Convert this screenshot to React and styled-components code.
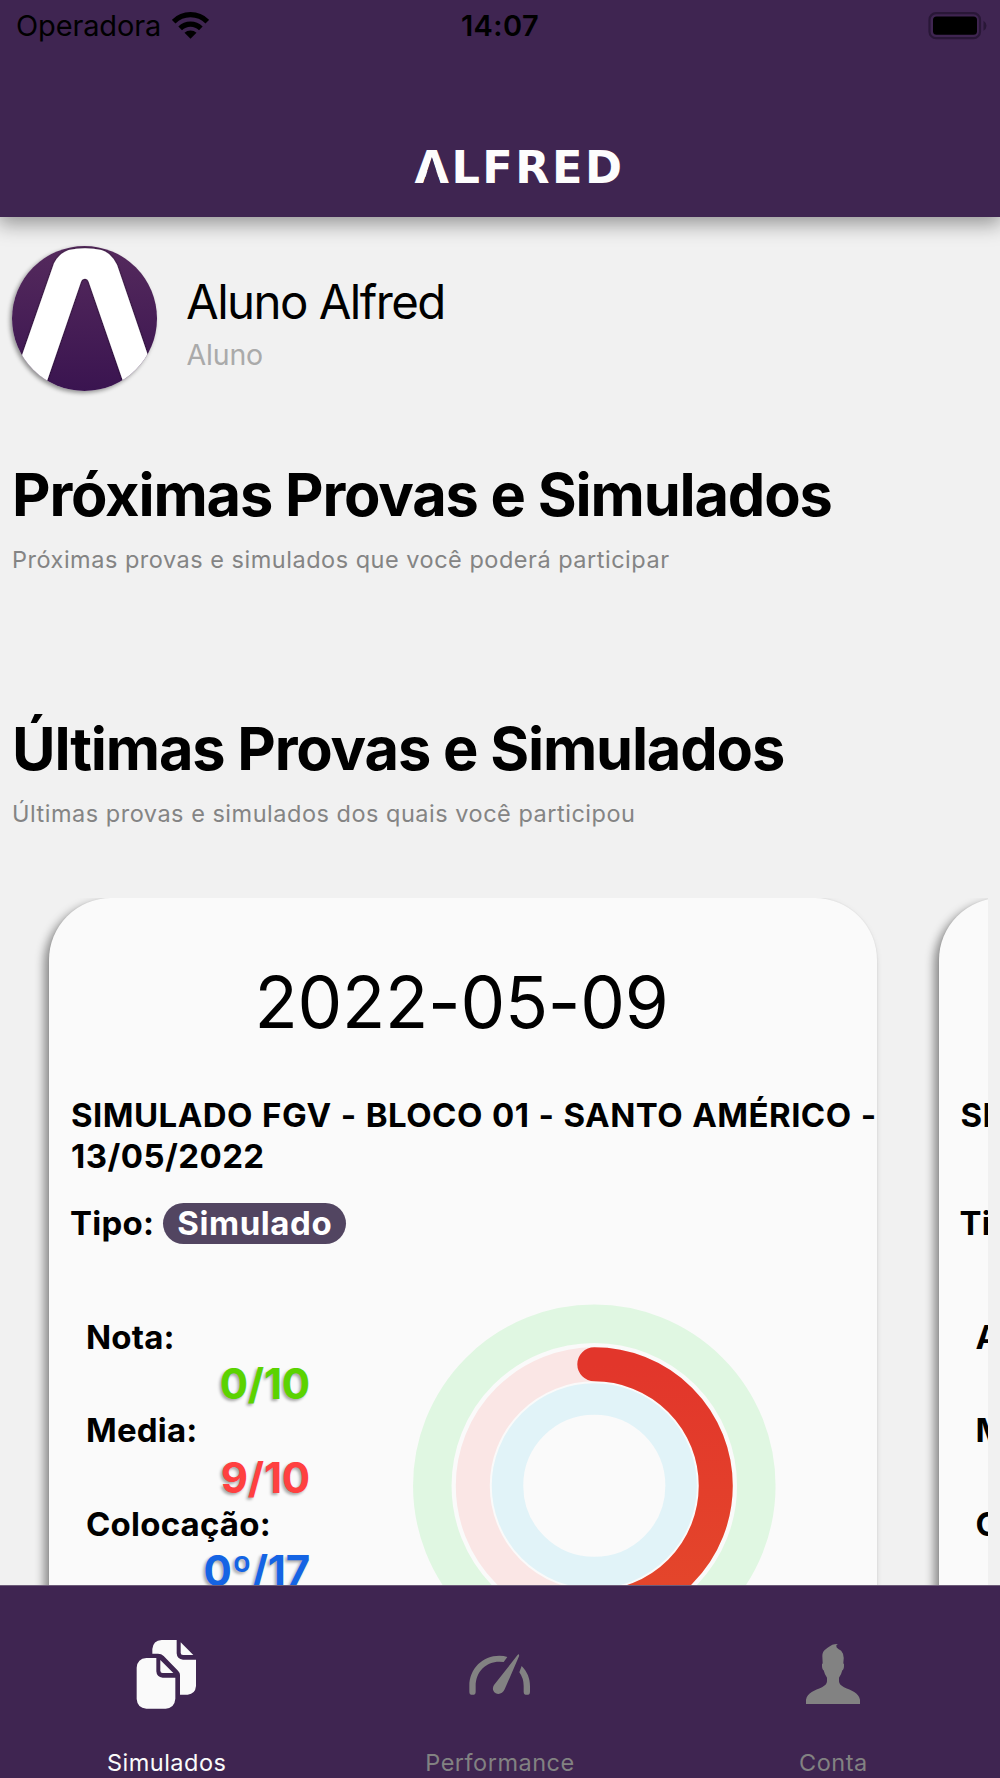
import React from 'react';
import styled, { createGlobalStyle } from 'styled-components';

const GlobalStyle = createGlobalStyle`
  html, body { margin: 0; padding: 0; }
  body { background: #f1f1f1; }
  *, *::before, *::after { box-sizing: border-box; }
`;

const Screen = styled.div`
  display: flex;
  flex-direction: column;
  width: 1000px;
  height: 1778px;
  overflow: hidden;
  background: #f1f1f1;
  color: #000;
  font-family: Inter, "Liberation Sans", sans-serif;
`;

const Header = styled.header`
  flex: none;
  display: flex;
  flex-direction: column;
  height: 217px;
  background: #3f2551;
  box-shadow: 0 5px 19px 2px rgba(0, 0, 0, 0.38);
  z-index: 2;
`;

const StatusBar = styled.div`
  display: grid;
  grid-template-columns: 1fr auto 1fr;
  align-items: center;
  height: 51px;
  padding: 0 12px 0 16px;
  font-size: 29px;
  line-height: 51px;
`;

const Carrier = styled.div`
  display: flex;
  align-items: center;
  gap: 11px;
  letter-spacing: -0.14px;
`;

const Clock = styled.div`
  margin-right: 4px;
  font-weight: 600;
  letter-spacing: 0.4px;
`;

const BatterySlot = styled.div`
  display: flex;
  justify-content: flex-end;
`;

const Brand = styled.div`
  display: flex;
  justify-content: center;
  margin-top: 91px;
  padding-left: 39px;
  color: #fdfdfd;
  font: 700 44.6px/52px "DejaVu Sans", sans-serif;
  letter-spacing: 2.5px;
`;

const OpenA = styled.span`
  position: relative;
  &::after {
    content: "";
    position: absolute;
    left: 8.5px;
    top: 15px;
    width: 18px;
    height: 28px;
    background: #3f2551;
    clip-path: polygon(50% 0, 100% 100%, 0 100%);
  }
`;

const Main = styled.main`
  flex: 1;
  min-height: 0;
  overflow: hidden;
  padding: 29px 12px 0;
`;

const Profile = styled.section`
  display: flex;
  align-items: flex-start;
  gap: 29px;
  height: 146px;
`;

const Avatar = styled.div`
  width: 145px;
  height: 145px;
  border-radius: 50%;
  box-shadow: -2px 2px 4px rgba(0, 0, 0, 0.4);
  svg { display: block; border-radius: 50%; }
`;

const Identity = styled.div`
  padding-top: 25.5px;
`;

const Name = styled.div`
  font-size: 47.4px;
  line-height: 60px;
  letter-spacing: -1.55px;
`;

const Role = styled.div`
  margin-top: 5px;
  padding-left: 0.6px;
  font-size: 28.5px;
  line-height: 36px;
  letter-spacing: -0.19px;
  color: #aaa;
`;

const Section = styled.section`
  margin-top: ${(p) => p.$gap}px;
`;

const SectionTitle = styled.h1`
  margin: 0;
  font-size: 59.5px;
  font-weight: 700;
  line-height: 72px;
  letter-spacing: -1.17px;
  white-space: nowrap;
`;

const SectionHint = styled.p`
  margin: 16px 0 0;
  font-size: 23.5px;
  line-height: 28px;
  letter-spacing: 0.51px;
  color: #848484;
`;

const Carousel = styled.div`
  display: flex;
  gap: 61.5px;
  margin-top: 70px;
  padding-left: 37px;
  overflow: hidden;
`;

const Card = styled.article`
  flex: none;
  width: 828px;
  height: 900px;
  padding-top: 62px;
  border-radius: 62px;
  background: #fafafa;
  box-shadow: -5px 5px 10px rgba(0, 0, 0, 0.42), 0 0 2px rgba(0, 0, 0, 0.08);
`;

const ExamDate = styled.div`
  padding-right: 3px;
  font-size: 71px;
  line-height: 84px;
  letter-spacing: -0.3px;
  text-align: center;
`;

const ExamTitle = styled.h2`
  width: 812px;
  min-height: 82px;
  margin: 51px 0 0 22px;
  font-size: 33px;
  font-weight: 700;
  line-height: 41px;
  letter-spacing: 0.45px;
  word-spacing: 0.9px;
`;

const KindRow = styled.div`
  display: flex;
  gap: 9px;
  margin: 26px 0 0 21px;
  font-size: 33px;
  font-weight: 700;
  line-height: 41px;
  letter-spacing: 0.25px;
`;

const Kind = styled.span`
  padding: 0 14px;
  border-radius: 21px;
  background: #524561;
  color: #fff;
  letter-spacing: 0.58px;
`;

const Details = styled.div`
  display: flex;
  align-items: flex-start;
  gap: 103px;
  margin: 60px 0 0 36px;
`;

const Stats = styled.div`
  display: flex;
  flex-direction: column;
  width: 225px;
  padding: 9.6px 0 0 1px;
`;

const StatLabel = styled.div`
  font-size: 33px;
  font-weight: 700;
  line-height: 46.75px;
  letter-spacing: 0.2px;
`;

const StatValue = styled.div`
  padding-top: 1px;
  font-size: 42px;
  font-weight: 700;
  line-height: 45.75px;
  letter-spacing: -0.2px;
  text-align: right;
  color: ${(p) => p.$tone};
  text-shadow: -2px 2px 3px rgba(0, 0, 0, 0.33);
`;

const TabBar = styled.nav`
  flex: none;
  display: grid;
  grid-template-columns: repeat(3, 1fr);
  height: 193px;
  border-top: 1px solid #6c5b78;
  background: #3f2551;
  z-index: 2;
`;

const Tab = styled.div`
  display: flex;
  flex-direction: column;
  align-items: center;
  padding-top: 48px;
  color: ${(p) => (p.$active ? '#fafafa' : '#828282')};
`;

const TabLabel = styled.span`
  margin-top: 19px;
  font-size: 23.5px;
  line-height: 28px;
  letter-spacing: 0.5px;
`;

const WifiIcon = () => (
  <svg width="37" height="28" viewBox="20 31 111 84" fill="none" stroke="#000" strokeWidth="15.500">
    <path d="M25 60 A 71 71 0 0 1 126 60" />
    <path d="M44.500 80 A 44 44 0 0 1 106.500 80" />
    <path d="M75.500 111 L57.500 93.500 A 26 26 0 0 1 93.500 93.500 Z" fill="#000" stroke="none" />
  </svg>
);

const BatteryIcon = () => (
  <svg width="60" height="28" viewBox="0 0 60 28">
    <rect x="1.500" y="1.200" width="50.500" height="25" rx="6.500" fill="none" stroke="#291737" strokeWidth="2.200" />
    <rect x="5" y="4.400" width="44" height="18.300" rx="3.500" fill="#000" />
    <path d="M55.500 8.700 Q58.500 10.700 58.500 13.700 Q58.500 16.700 55.500 18.700 Z" fill="#291737" />
  </svg>
);

const AvatarMark = () => (
  <svg width="145" height="145" viewBox="0 0 435 435">
    <defs>
      <linearGradient id="plum" x1="0" y1="0" x2="0" y2="1">
        <stop offset="0" stopColor="#552a5d" />
        <stop offset="1" stopColor="#3a1450" />
      </linearGradient>
      <filter id="soft" x="-10%" y="-10%" width="120%" height="120%">
        <feDropShadow dx="0" dy="0" stdDeviation="3" floodColor="#000" floodOpacity="0.7" />
      </filter>
    </defs>
    <rect width="435" height="435" fill="url(#plum)" />
    <path
      d="M-8 437 L126 52 Q141 22 170 12 Q192 7 219 7 Q246 7 268 12 Q299 22 315 56 L445 437 L344 437 L230 107 Q227 98 219 98 Q210 98 207 107 L94 437 Z"
      fill="#fff"
      filter="url(#soft)"
    />
  </svg>
);

const Rings = () => (
  <svg width="364" height="364" viewBox="0 0 364 364" fill="none">
    <defs>
      <linearGradient id="ember" x1="0" y1="0" x2="0" y2="1">
        <stop offset="0" stopColor="#e2362b" />
        <stop offset="1" stopColor="#e4472b" />
      </linearGradient>
    </defs>
    <circle cx="181.300" cy="181.800" r="162" stroke="#e0f7e2" strokeWidth="38.500" />
    <circle cx="181.300" cy="181.800" r="121.500" stroke="#fae6e5" strokeWidth="34" />
    <circle cx="181.300" cy="181.800" r="86.800" stroke="#e1f3f8" strokeWidth="31.500" />
    <path d="M181.300 60.300 A121.500 121.500 0 0 1 181.300 303.300" stroke="url(#ember)" strokeWidth="34" strokeLinecap="round" />
  </svg>
);

const DocumentsIcon = () => (
  <svg width="80" height="96" viewBox="80 72 240 288" fill="currentColor">
    <path d="M156 131 V117 Q158 92 184 90 H229 V130 Q230 148 248 149 H287 V228 Q285 252 262 254 H239 V195 Q239 188 233 182 L190 138 Q183 131 173 131 Z" />
    <path d="M241 97 L279 135 H248 Q241 135 241 128 Z" />
    <path d="M138 144 H168 V184 Q169 202 187 203 H225 V266 Q223 293 196 296 H138 Q111 294 109 267 V173 Q111 146 138 144 Z" />
    <path d="M180 150 L219 189 H187 Q180 189 180 182 Z" />
  </svg>
);

const GaugeIcon = () => (
  <svg width="80" height="96" viewBox="120 42 240 288" fill="currentColor">
    <path d="M148 215 V198 C148 145 188 107 238 107 Q252 107 262 111 L251 126 Q245 125 238 125 C198 125 167 155 167 198 V215 A9.500 9.500 0 0 1 148 215 Z" />
    <path d="M305 138 C322 155 330 176 330 198 V215 A9.500 9.500 0 0 1 311 215 V198 Q311 175 298 157 Z" />
    <path d="M296 103 Q298 105 297 109 L254 208 C247 224 229 226 221 214 Q216 205 222 195 L292 106 Q295 102 296 103 Z" />
  </svg>
);

const PersonIcon = () => (
  <svg width="80" height="96" viewBox="99 42 240 288" fill="currentColor">
    <path d="M234 72 Q217 71 205 82 C193 90 187 96 187 108 L188 130 Q185 131 186 139 Q187 150 191 151 Q194 164 201 173 V184 Q201 194 186 202 C164 212 142 218 138 239 V252 H300 V239 C296 218 274 212 252 202 Q237 194 237 184 V173 Q244 164 247 151 Q251 150 252 139 Q253 131 250 130 Q253 112 249 101 Q245 91 235 87 Q227 82 229 76 Q231 73 234 72 Z" />
  </svg>
);

const exams = [
  {
    date: '2022-05-09',
    title: 'SIMULADO FGV - BLOCO 01 - SANTO AMÉRICO - 13/05/2022',
    kind: 'Simulado',
    stats: [
      ['Nota:', '0/10', '#5bd300'],
      ['Media:', '9/10', '#ff4040'],
      ['Colocação:', '0º/17', '#1464e4'],
    ],
  },
  {
    date: '2022-05-09',
    title: 'SIMULADO',
    kind: 'Simulado',
    stats: [
      ['Acertos:', '0/10', '#5bd300'],
      ['Media:', '9/10', '#ff4040'],
      ['Colocação:', '0º/17', '#1464e4'],
    ],
  },
];

const ExamCard = ({ exam }) => (
  <Card>
    <ExamDate>{exam.date}</ExamDate>
    <ExamTitle>{exam.title}</ExamTitle>
    <KindRow>
      <span>Tipo:</span>
      <Kind>{exam.kind}</Kind>
    </KindRow>
    <Details>
      <Stats>
        {exam.stats.map(([label, value, tone]) => (
          <React.Fragment key={label}>
            <StatLabel>{label}</StatLabel>
            <StatValue $tone={tone}>{value}</StatValue>
          </React.Fragment>
        ))}
      </Stats>
      <Rings />
    </Details>
  </Card>
);

export default function App() {
  return (
    <Screen>
      <GlobalStyle />
      <Header>
        <StatusBar>
          <Carrier>
            Operadora
            <WifiIcon />
          </Carrier>
          <Clock>14:07</Clock>
          <BatterySlot>
            <BatteryIcon />
          </BatterySlot>
        </StatusBar>
        <Brand>
          <OpenA>A</OpenA>LFRED
        </Brand>
      </Header>
      <Main>
        <Profile>
          <Avatar>
            <AvatarMark />
          </Avatar>
          <Identity>
            <Name>Aluno Alfred</Name>
            <Role>Aluno</Role>
          </Identity>
        </Profile>
        <Section $gap={66}>
          <SectionTitle>Próximas Provas e Simulados</SectionTitle>
          <SectionHint>Próximas provas e simulados que você poderá participar</SectionHint>
        </Section>
        <Section $gap={138}>
          <SectionTitle>Últimas Provas e Simulados</SectionTitle>
          <SectionHint>Últimas provas e simulados dos quais você participou</SectionHint>
          <Carousel>
            {exams.map((exam, i) => (
              <ExamCard key={i} exam={exam} />
            ))}
          </Carousel>
        </Section>
      </Main>
      <TabBar>
        <Tab $active>
          <DocumentsIcon />
          <TabLabel>Simulados</TabLabel>
        </Tab>
        <Tab>
          <GaugeIcon />
          <TabLabel>Performance</TabLabel>
        </Tab>
        <Tab>
          <PersonIcon />
          <TabLabel>Conta</TabLabel>
        </Tab>
      </TabBar>
    </Screen>
  );
}
